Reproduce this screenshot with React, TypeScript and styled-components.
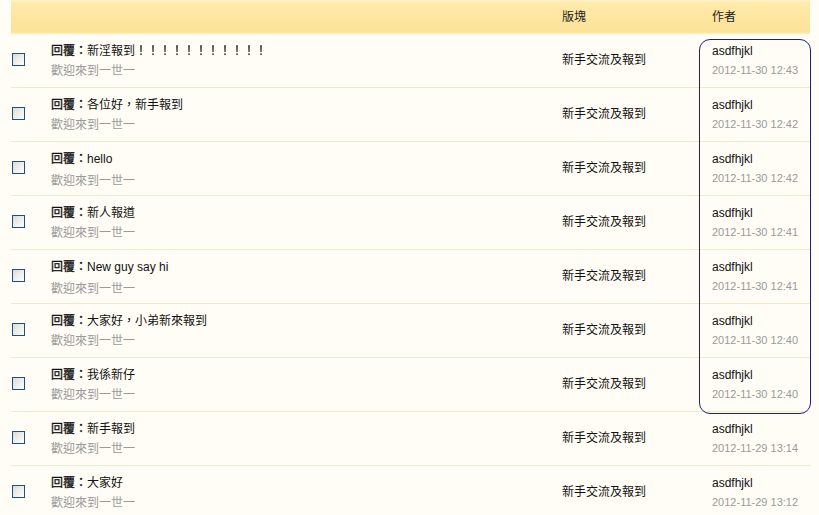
import React from "react";
import styled, { createGlobalStyle } from "styled-components";

const Global = createGlobalStyle`
  html, body { margin: 0; padding: 0; background: #fffdf6; }
  body { font-family: "Liberation Sans", "Noto Sans CJK TC", sans-serif; font-size: 12px; color: #000; }
`;

const Page = styled.div`
  position: relative;
  width: 819px;
  height: 515px;
  overflow: hidden;
  background: #fffdf6;
`;

const Table = styled.div`
  margin-left: 11px;
  width: 799px;
`;

const cols = "40px 511px 150px 98px";

const HeaderRow = styled.div`
  display: grid;
  grid-template-columns: ${cols};
  height: 34px;
  align-items: center;
  background: linear-gradient(#fff3cc 0px, #ffeaaa 3px, #fee6a0 50%, #fde39a 94%, #fff0c4 100%);
  color: #222;
`;

const HeadCell = styled.div`
  padding-bottom: 4px;
`;

const Row = styled.div`
  display: grid;
  grid-template-columns: ${cols};
  height: 53px;
  border-bottom: 1px solid #f1e9cc;
`;

const CheckCell = styled.div`
  display: flex;
  align-items: center;
  padding-left: 1px;
`;

const Box = styled.input.attrs({ type: "checkbox" })`
  appearance: none;
  margin: 0 0 3px 0;
  width: 13px;
  height: 13px;
  box-sizing: border-box;
  border: 1px solid #1c5180;
  background: linear-gradient(135deg, #dcdcd7 0%, #eeeee9 50%, #fdfdfb 100%);
`;

const TitleCell = styled.div`
  padding-top: 5px;
  display: flex;
  flex-direction: column;
`;

const Title = styled.div<{ $cjk?: boolean }>`
  line-height: 21px;
  white-space: nowrap;
  color: #111;
  font-family: ${(p) =>
    p.$cjk
      ? `"Noto Sans CJK TC", "Liberation Sans", sans-serif`
      : `"Liberation Sans", "Noto Sans CJK TC", sans-serif`};
`;

const Prefix = styled.span`
  font-family: "Noto Sans CJK TC", sans-serif;
  -webkit-text-stroke: 0.3px #111;
`;

const Bang = styled.span`
  display: inline-block;
  font-family: "Noto Sans CJK TC", sans-serif;
  color: #111;
  will-change: transform;
  -webkit-text-stroke: 0.2px #111;
`;

const Sub = styled.div`
  line-height: 22px;
  color: #9a9a9a;
`;

const BoardCell = styled.div`
  display: flex;
  align-items: center;
  color: #111;
  padding-bottom: 5px;
`;

const AuthorCell = styled.div`
  padding-top: 7px;
  display: flex;
  flex-direction: column;
`;

const Author = styled.div`
  line-height: 20px;
  color: #111;
`;

const DateText = styled.div`
  line-height: 19px;
  font-size: 11px;
  color: #9a9a9a;
`;

const Highlight = styled.div`
  position: absolute;
  left: 699px;
  top: 39px;
  width: 112px;
  height: 375px;
  box-sizing: border-box;
  border: 1.5px solid #1e1e8c;
  border-radius: 11px;
  pointer-events: none;
`;

const rows = [
  { t: "新淫報到", bang: "！！！！！！！！！！！", d: "2012-11-30 12:43", cjk: true },
  { t: "各位好，新手報到", d: "2012-11-30 12:42", cjk: true },
  { t: "hello", d: "2012-11-30 12:42", cjk: false },
  { t: "新人報道", d: "2012-11-30 12:41", cjk: true },
  { t: "New guy say hi", d: "2012-11-30 12:41", cjk: false },
  { t: "大家好，小弟新來報到", d: "2012-11-30 12:40", cjk: true },
  { t: "我係新仔", d: "2012-11-30 12:40", cjk: true },
  { t: "新手報到", d: "2012-11-29 13:14", cjk: true },
  { t: "大家好", d: "2012-11-29 13:12", cjk: true },
];

export default function App() {
  return (
    <Page>
      <Global />
      <Table>
        <HeaderRow>
          <HeadCell />
          <HeadCell />
          <HeadCell>版塊</HeadCell>
          <HeadCell>作者</HeadCell>
        </HeaderRow>
        {rows.map((r, i) => (
          <Row key={i}>
            <CheckCell>
              <Box />
            </CheckCell>
            <TitleCell>
              <Title $cjk={r.cjk}>
                <Prefix>回覆：</Prefix>
                {r.t}
                {r.bang && <Bang>{r.bang}</Bang>}
              </Title>
              <Sub>歡迎來到一世一</Sub>
            </TitleCell>
            <BoardCell>新手交流及報到</BoardCell>
            <AuthorCell>
              <Author>asdfhjkl</Author>
              <DateText>{r.d}</DateText>
            </AuthorCell>
          </Row>
        ))}
      </Table>
      <Highlight />
    </Page>
  );
}
